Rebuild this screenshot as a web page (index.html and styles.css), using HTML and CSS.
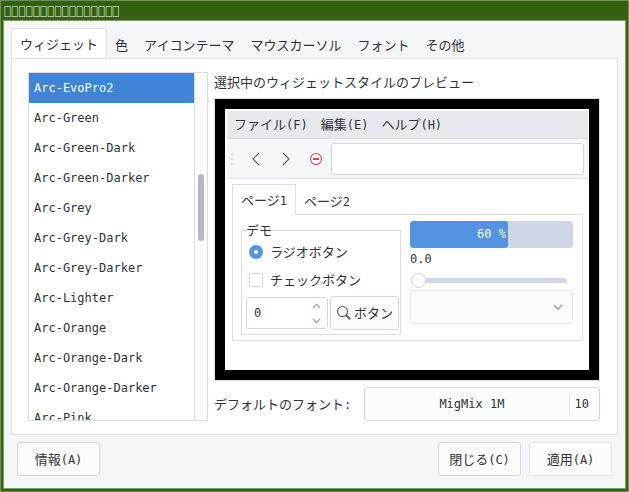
FILE: index.html
```html
<!DOCTYPE html>
<html lang="ja">
<head>
    <meta charset="UTF-8">
    <meta name="viewport" content="width=device-width, initial-scale=1.0">
    <title>ウィジェット</title>
    <link rel="stylesheet" href="styles.css">
</head>
<body>
    <div class="window">
        <header class="titlebar">&#xE000;&#xE000;&#xE000;&#xE000;&#xE000;&#xE000;&#xE000;&#xE000;&#xE000;&#xE000;&#xE000;&#xE000;&#xE000;&#xE000;&#xE000;&#xE000;</header>

        <main class="client">
            <nav class="tabs" role="tablist">
                <button class="tab active" role="tab" aria-selected="true">ウィジェット</button>
                <button class="tab" role="tab">色</button>
                <button class="tab" role="tab">アイコンテーマ</button>
                <button class="tab" role="tab">マウスカーソル</button>
                <button class="tab" role="tab">フォント</button>
                <button class="tab" role="tab">その他</button>
            </nav>

            <section class="page">
                <div class="theme-list">
                    <ul class="themes" role="listbox" aria-label="テーマ">
                        <li class="theme selected" role="option" aria-selected="true">Arc-EvoPro2</li>
                        <li class="theme" role="option">Arc-Green</li>
                        <li class="theme" role="option">Arc-Green-Dark</li>
                        <li class="theme" role="option">Arc-Green-Darker</li>
                        <li class="theme" role="option">Arc-Grey</li>
                        <li class="theme" role="option">Arc-Grey-Dark</li>
                        <li class="theme" role="option">Arc-Grey-Darker</li>
                        <li class="theme" role="option">Arc-Lighter</li>
                        <li class="theme" role="option">Arc-Orange</li>
                        <li class="theme" role="option">Arc-Orange-Dark</li>
                        <li class="theme" role="option">Arc-Orange-Darker</li>
                        <li class="theme" role="option">Arc-Pink</li>
                    </ul>
                    <div class="scrollbar">
                        <div class="thumb"></div>
                    </div>
                </div>

                <div class="detail">
                    <h1 class="caption">選択中のウィジェットスタイルのプレビュー</h1>

                    <div class="preview">
                        <div class="demo">
                            <div class="menubar">
                                <button class="menu">ファイル<span class="key">(F)</span></button>
                                <button class="menu">編集<span class="key">(E)</span></button>
                                <button class="menu">ヘルプ<span class="key">(H)</span></button>
                            </div>

                            <div class="toolbar">
                                <svg class="grip" width="2" height="12" viewBox="0 0 2 12"><path d="M0 0h2v2H0zM0 5h2v2H0zM0 10h2v2H0z" fill="#cfd6e6"/></svg>
                                <button class="tool" aria-label="戻る">
                                    <svg width="16" height="16" viewBox="0 0 16 16"><path d="M11 2 5 8l6 6" fill="none" stroke="#5c616c" stroke-width="1.2"/></svg>
                                </button>
                                <button class="tool" aria-label="進む">
                                    <svg width="16" height="16" viewBox="0 0 16 16"><path d="M5 2l6 6-6 6" fill="none" stroke="#5c616c" stroke-width="1.2"/></svg>
                                </button>
                                <button class="tool" aria-label="中止">
                                    <svg width="16" height="16" viewBox="0 0 16 16"><circle cx="8" cy="8" r="5.5" fill="none" stroke="#da4453" stroke-width="1.1"/><path d="M5 7h6v2H5z" fill="#da4453"/></svg>
                                </button>
                                <input class="entry" type="text" aria-label="入力">
                            </div>

                            <div class="notebook">
                                <div class="tabs" role="tablist">
                                    <button class="tab active" role="tab" aria-selected="true">ページ<span class="key">1</span></button>
                                    <button class="tab" role="tab">ページ<span class="key">2</span></button>
                                </div>
                                <div class="sheet">
                                    <fieldset class="group">
                                        <legend>デモ</legend>
                                        <label class="option"><input class="radio" type="radio" checked>ラジオボタン</label>
                                        <label class="option"><input class="check" type="checkbox">チェックボタン</label>
                                        <div class="row">
                                            <div class="spin">
                                                <input class="spin-value" type="text" value="0" aria-label="数値">
                                                <div class="arrows">
                                                    <button class="arrow" aria-label="増やす"><svg width="9" height="6" viewBox="0 0 9 6"><path d="M1 5l3.5-3.5L8 5" fill="none" stroke="#a5a8ae" stroke-width="1.3"/></svg></button>
                                                    <button class="arrow" aria-label="減らす"><svg width="9" height="6" viewBox="0 0 9 6"><path d="M1 1l3.5 3.5L8 1" fill="none" stroke="#a5a8ae" stroke-width="1.3"/></svg></button>
                                                </div>
                                            </div>
                                            <button class="button find">
                                                <svg width="16" height="16" viewBox="0 0 16 16"><circle cx="6.5" cy="6.5" r="5" fill="none" stroke="#5c616c" stroke-width="1.1"/><path d="M10.2 10.2l4 4" stroke="#5c616c" stroke-width="2"/></svg>
                                                ボタン
                                            </button>
                                        </div>
                                    </fieldset>

                                    <div class="meters">
                                        <div class="progress">
                                            <progress class="bar" max="100" value="60" aria-label="進捗"></progress>
                                            <span class="percent">60 %</span>
                                        </div>
                                        <label class="scale-value" for="scale">0.0</label>
                                        <input class="scale" id="scale" type="range" min="0" max="100" value="0">
                                        <div class="combo">
                                            <select class="combo-box" aria-label="選択" disabled></select>
                                            <svg class="combo-arrow" width="10" height="7" viewBox="0 0 10 7"><path d="M1 1l4 4 4-4" fill="none" stroke="#a5a8ae" stroke-width="1.6"/></svg>
                                        </div>
                                    </div>
                                </div>
                            </div>
                        </div>
                    </div>

                    <div class="font-row">
                        <label for="font">デフォルトのフォント<span class="key">:</span></label>
                        <button class="button font-button" id="font">
                            <span class="font-name">MigMix 1M</span>
                            <span class="font-size">10</span>
                        </button>
                    </div>
                </div>
            </section>

            <footer class="actions">
                <button class="button action about">情報<span class="key">(A)</span></button>
                <button class="button action">閉じる<span class="key">(C)</span></button>
                <button class="button action inactive">適用<span class="key">(A)</span></button>
            </footer>
        </main>
    </div>
</body>
</html>
```

FILE: styles.css
```css
* {
    box-sizing: border-box;
}

body {
    margin: 0;
    font-family: "Noto Sans CJK JP", sans-serif;
    font-size: 13px;
    line-height: 20px;
    color: #30333a;
}

button,
input,
select {
    margin: 0;
    padding: 0;
    font: inherit;
    color: inherit;
}

svg {
    display: block;
    flex: none;
}

.key,
.theme,
.font-button,
.percent,
.scale-value,
.spin-value,
.titlebar {
    font-family: "DejaVu Sans Mono", monospace;
    font-size: 12px;
}

/* window frame */
.window {
    display: flex;
    flex-direction: column;
    min-height: 100vh;
    padding: 0 3px 3px;
    background-color: #33610f;
    border: 1px solid #6f9154;
}

.titlebar {
    height: 20px;
    line-height: 20px;
    color: #c5d3b8;
}

.client {
    flex: 1;
    display: flex;
    flex-direction: column;
    padding: 7px 7px 12px;
    background-color: #f5f6f8;
    outline: 1px solid #7f9e69;
}

/* tabs */
.tabs {
    display: flex;
    margin-bottom: -1px;
}

.tab {
    height: 31px;
    padding: 3px 8px 0;
    border: none;
    background: none;
}

.tab.active {
    padding-top: 0;
    background-color: #fff;
    border: 1px solid #dce0ea;
    border-bottom: none;
}

.page {
    flex: 1;
    display: flex;
    gap: 6px;
    padding: 13px 17px 13px 16px;
    background-color: #fff;
    border: 1px solid #dce0ea;
}

/* theme list */
.theme-list {
    display: flex;
    flex: none;
    width: 180px;
    border: 1px solid #dcdde1;
}

.themes {
    flex: 1;
    height: 0;
    min-height: 100%;
    margin: 0;
    padding: 0;
    overflow: hidden;
    list-style: none;
}

.theme {
    padding: 0 5px;
    line-height: 30px;
}

.theme.selected {
    background-color: #4084d6;
    color: #fff;
}

.scrollbar {
    width: 13px;
    padding: 101px 3px 0;
    background-color: #fcfcfc;
    border-left: 1px solid #dcdde1;
}

.thumb {
    width: 6px;
    height: 67px;
    border-radius: 3px;
    background-color: #b8b8c0;
}

/* preview */
.detail {
    flex: 1;
    display: flex;
    flex-direction: column;
    min-width: 0;
}

.caption {
    margin: 0 0 6px;
    font-size: 13px;
    font-weight: normal;
}

.preview {
    flex: 1;
    display: flex;
    margin-bottom: 6px;
    padding: 10px;
    background-color: #000;
    border: 1px solid #dcdcdc;
}

.demo {
    flex: 1;
    min-width: 0;
    padding: 2px 1px 2px 2px;
    background-color: #fff;
}

.menubar {
    display: flex;
    gap: 13px;
    height: 28px;
    padding: 0 7px;
    background-color: #e7e8eb;
    border-bottom: 1px solid #d7dae1;
}

.menu {
    border: none;
    background: none;
}

.toolbar {
    display: flex;
    align-items: center;
    height: 40px;
    padding: 0 4px;
    background-color: #f5f6f8;
    border-bottom: 1px solid #dce0ea;
}

.grip {
    margin-right: 8px;
}

.tool {
    display: flex;
    justify-content: center;
    width: 30px;
    border: none;
    background: none;
}

.entry {
    flex: 1;
    min-width: 0;
    height: 32px;
    border: 1px solid #cfd6e6;
    border-radius: 3px;
    background-color: #fff;
}

.notebook {
    padding: 5px;
}

.sheet {
    display: flex;
    gap: 9px;
    padding: 5px 9px 5px 8px;
    border: 1px solid #dce0ea;
}

.group {
    width: 160px;
    height: 113px;
    margin: 2px 0 0;
    padding: 0 1px 0 4px;
    border: 1px solid #dcdcdc;
}

.group legend {
    padding: 0;
    line-height: 16px;
}

.option {
    display: flex;
    align-items: center;
    gap: 7px;
    height: 28px;
    padding-left: 3px;
}

.row {
    display: flex;
    align-items: center;
    gap: 2px;
    padding-top: 2px;
}

.radio,
.check {
    width: 14px;
    height: 14px;
    appearance: none;
    background-color: #fff;
    border: 1px solid #cfd6e6;
    border-radius: 1px;
}

.radio:checked {
    border: 5px solid #5294e2;
    border-radius: 50%;
}

.spin {
    display: flex;
    width: 82px;
    height: 32px;
    overflow: hidden;
    border: 1px solid #cfd6e6;
    border-radius: 3px;
}

.spin-value {
    flex: 1;
    min-width: 0;
    padding-left: 7px;
    border: none;
}

.arrows {
    display: flex;
    flex-direction: column;
    width: 21px;
    background-color: #fbfcfc;
}

.arrow {
    flex: 1;
    display: flex;
    align-items: center;
    justify-content: center;
    border: none;
    background: none;
}

.button {
    height: 34px;
    background-color: #fbfcfc;
    border: 1px solid #cfd6e6;
    border-radius: 3px;
}

.find {
    display: flex;
    flex: 1;
    align-items: center;
    justify-content: center;
    gap: 2px;
    white-space: nowrap;
}

.meters {
    flex: 1;
    display: flex;
    flex-direction: column;
    min-width: 0;
}

.progress {
    position: relative;
    height: 28px;
    padding-top: 1px;
}

.bar {
    display: block;
    width: 100%;
    height: 27px;
    appearance: none;
    border: none;
    border-radius: 3px;
    overflow: hidden;
}

.bar::-webkit-progress-bar {
    background-color: #cfd6e6;
}

.bar::-webkit-progress-value {
    background-color: #5294e2;
    border-radius: 3px;
}

/* text drawn over the bar */
.percent {
    position: absolute;
    inset: 0;
    line-height: 28px;
    text-align: center;
    color: #fff;
}

.scale-value {
    height: 22px;
    line-height: 22px;
}

.scale {
    width: auto;
    height: 20px;
    margin: 0 6px 0 1px;
    appearance: none;
    background: none;
}

.scale::-webkit-slider-runnable-track {
    height: 5px;
    border-radius: 3px;
    background-color: #cfd6e6;
}

.scale::-webkit-slider-thumb {
    width: 15px;
    height: 15px;
    margin-top: -5px;
    appearance: none;
    background-color: #fff;
    border: 1px solid #cbd2e3;
    border-radius: 50%;
}

.combo {
    position: relative;
}

.combo-box {
    display: block;
    width: 100%;
    height: 34px;
    appearance: none;
    background-color: #fbfcfc;
    border: 1px solid #e2e7ef;
    border-radius: 3px;
    opacity: 1;
}

.combo-arrow {
    position: absolute;
    top: 14px;
    right: 10px;
}

/* default font */
.font-row {
    display: flex;
    align-items: center;
    gap: 13px;
}

.font-button {
    display: flex;
    flex: 1;
    align-items: center;
    padding: 0 10px;
}

.font-name {
    flex: 1;
}

.font-size {
    padding-left: 5px;
    border-left: 1px solid #dcdfe3;
}

/* bottom buttons */
.actions {
    display: flex;
    gap: 8px;
    padding: 7px 6px 0;
}

.action {
    width: 83px;
}

.about {
    margin-right: auto;
}

.inactive {
    border-color: #e2e7ef;
}
```
